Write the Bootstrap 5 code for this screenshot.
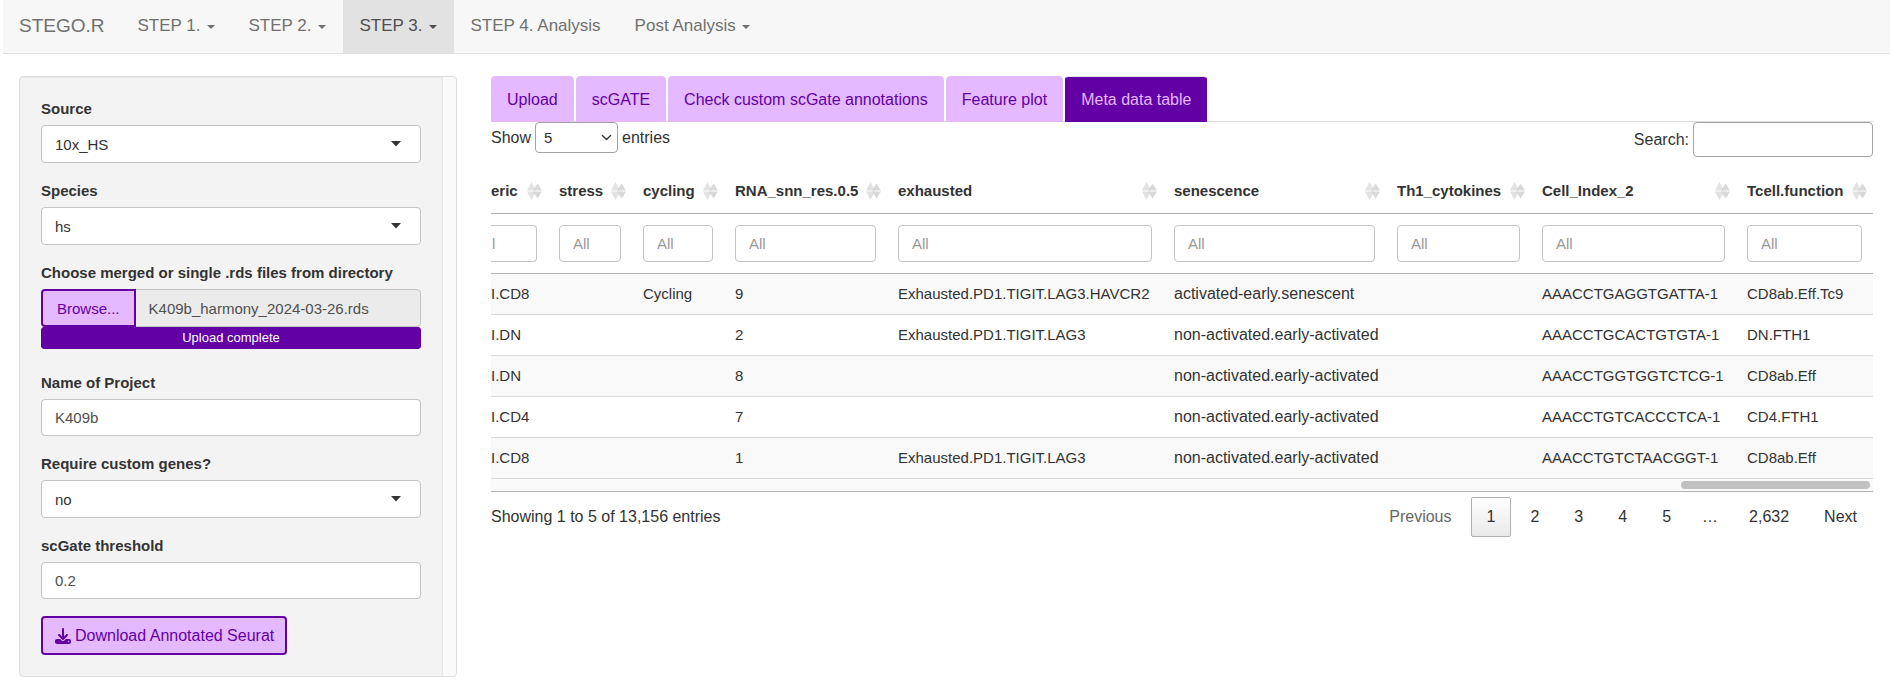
<!DOCTYPE html>
<html lang="en">
<head>
<meta charset="utf-8">
<meta name="viewport" content="width=device-width, initial-scale=1">
<title>STEGO.R</title>
<link href="https://cdn.jsdelivr.net/npm/bootstrap@5.3.0/dist/css/bootstrap.min.css" rel="stylesheet">
<style>
:root { --deep: #6200a6; --pale: #e4b9ff; --line: #b3b3b3; }
body { font-family: "Liberation Sans", Arial, sans-serif; font-size: 16px; line-height: 22px; color: #333; background: #fff; }
.app-bar { margin: 0 9px 0 3px; padding: 0; background: #f7f7f7; border-bottom: 1px solid #e1e1e1; }
.app-bar .navbar-brand { font-size: 19px; color: #707070; padding: 15px 16px 16px; margin: 0; line-height: 22px; }
.app-bar .nav-link { font-size: 17px; line-height: 22px; color: #707070; padding: 15px 17px 16px !important; }
.app-bar .nav-link.active { background: #e2e2e2; color: #4f4f4f; }
.app-bar .dropdown-toggle::after { margin-left: 6px; vertical-align: 2px; border-width: 4px 4px 0; }
.app-body { margin: 22px 9px 0 2px; }
.app-body > .row { --bs-gutter-x: 34px; margin: 0; }
.side-well { background: #f3f3f3; border: 1px solid #dedede; border-radius: 4px; box-shadow: inset 0 1px 1px #0000000d; }
.side-form { padding: 21px; }
.side-track { width: 14px; background: #fafafa; border-left: 1px solid #e6e6e6; border-radius: 0 4px 4px 0; }
.field { margin-bottom: 17px; }
.file-field { margin-bottom: 23px; }
.side-form label { display: block; font-size: 15px; font-weight: 700; margin-bottom: 5px; line-height: 22px; white-space: nowrap; }
.form-control, .form-select { font-size: 15px; line-height: 21px; border-color: #c4c4c4; border-radius: 4px; padding: 7px 13px; color: #505050; height: 37px; background-color: #fff; }
.side-form .form-select { height: 38px; color: #333; background-size: 10px 6px; background-position: right 19px center;
  background-image: url("data:image/svg+xml,%3Csvg xmlns='http://www.w3.org/2000/svg' viewBox='0 0 10 6'%3E%3Cpath d='M0 0h10L5 5.500z' fill='%23333'/%3E%3C/svg%3E"); }
.purple-btn { background: var(--pale); border: 2px solid var(--deep); color: var(--deep); font-size: 16px; line-height: 21px; border-radius: 4px; padding: 7px 11px 7px 12px; height: 39px; }
.file-row .purple-btn { height: 38px; padding: 7px 14px; font-size: 15px; }
.file-row .form-control { height: 38px; background: #ebebeb; }
.done-bar { height: 22px; border-radius: 4px; background: var(--deep); font-size: 13px; }
.done-bar .progress-bar { background: var(--deep); }
.step-tabs { border-bottom: 1px solid #ddd; gap: 2px; }
.step-tabs .nav-link { font-size: 16px; line-height: 22px; padding: 12px 15px 10px; color: var(--deep); background: var(--pale); border-color: var(--pale); border-radius: 4px 4px 0 0; margin-bottom: -1px; }
.step-tabs .nav-link.active { color: var(--pale); background: var(--deep); border-color: #ddd var(--deep) var(--deep); }
.grid-tools { margin-bottom: 12px; }
.length-pick { width: 83px; height: 31px; padding: 4px 8px; border-color: #a3a3a3; color: #333; background-position: right 5px center; background-size: 11px 11px; }
.find-box { width: 180px; height: 35px; border-color: #a3a3a3; }
.meta-frame { border-bottom: 1px solid var(--line); }
.meta-grid { table-layout: fixed; width: 100%; font-size: 15px; white-space: nowrap; margin: 0; }
.meta-grid th { height: 44px; padding: 0 6px 0 11px; font-weight: 700; border-bottom: 1px solid var(--line); }
.meta-grid td { padding: 9px 0 9px 11px; border-bottom: 1px solid #dadada; height: 41px; line-height: 22px; }
.meta-grid .filters td { padding: 11px 11px 10px; height: 60px; border-bottom: 1px solid var(--line); }
.meta-grid tr > :first-child { padding-left: 0; }
.meta-grid .filters td:first-child { padding-left: 0; }
.meta-grid .filters td:first-child .form-control { border-left: 0; border-radius: 0 4px 4px 0; padding-left: 1px; }
.meta-grid tbody tr:nth-child(odd) { background: #f9f9f9; }
.meta-grid .prose { font-size: 16px; }
.meta-grid .form-control::placeholder { color: #999; opacity: 1; }
.w-a { width: 57px } .w-b { width: 84px } .w-c { width: 92px } .w-d { width: 163px } .w-e { width: 276px }
.w-f { width: 223px } .w-g { width: 145px } .w-h { width: 205px } .w-i { width: 137px }
.scroll-strip { height: 12px; background: #fafafa; padding: 2px 3px; }
.scroll-thumb { width: 189px; height: 8px; border-radius: 4px; background: #c1c1c1; }
.grid-foot { padding-top: 5px; }
.pages { gap: 4px; }
.pages .page-link { font-size: 16px; line-height: 22px; padding: 8px 15px; border: 1px solid transparent; border-radius: 2px; color: #333; background: none; }
.pages .page-gap { padding: 8px 11px; }
.pages .disabled .page-link { color: #666; }
.pages .active .page-link { border-color: #b0b0b0; background: linear-gradient(#fff, #e9e9e9); }
</style>
</head>
<body>
<nav class="navbar navbar-expand app-bar">
  <a class="navbar-brand" href="#">STEGO.R</a>
  <ul class="navbar-nav">
    <li class="nav-item"><a class="nav-link dropdown-toggle" href="#">STEP 1.</a></li>
    <li class="nav-item"><a class="nav-link dropdown-toggle" href="#">STEP 2.</a></li>
    <li class="nav-item"><a class="nav-link dropdown-toggle active" href="#">STEP 3.</a></li>
    <li class="nav-item"><a class="nav-link" href="#">STEP 4. Analysis</a></li>
    <li class="nav-item"><a class="nav-link dropdown-toggle" href="#">Post Analysis</a></li>
  </ul>
</nav>

<svg class="d-none" aria-hidden="true">
  <symbol id="sort" viewBox="0 0 15 18"><path d="M0 8.400 4.500 0 9 8.400zM0 9.600h9L4.500 18z" fill="#e2e2e2"/><path d="M6 8.400 10.600 1.500 15 8.400zM6 9.600h9l-4.400 7z" fill="#d2d2d2" fill-opacity=".85"/></symbol>
</svg>

<div class="app-body">
  <div class="row">
    <aside class="col-3">
      <div class="side-well d-flex">
        <form class="side-form flex-grow-1">
          <div class="field">
            <label for="source">Source</label>
            <select class="form-select" id="source"><option>10x_HS</option></select>
          </div>
          <div class="field">
            <label for="species">Species</label>
            <select class="form-select" id="species"><option>hs</option></select>
          </div>
          <div class="file-field">
            <label for="rds">Choose merged or single .rds files from directory</label>
            <div class="input-group file-row">
              <button type="button" class="btn purple-btn">Browse...</button>
              <input type="text" class="form-control" id="rds" value="K409b_harmony_2024-03-26.rds" readonly>
            </div>
            <div class="progress done-bar"><div class="progress-bar w-100">Upload complete</div></div>
          </div>
          <div class="field">
            <label for="project">Name of Project</label>
            <input type="text" class="form-control" id="project" value="K409b">
          </div>
          <div class="field">
            <label for="genes">Require custom genes?</label>
            <select class="form-select" id="genes"><option>no</option></select>
          </div>
          <div class="field">
            <label for="threshold">scGate threshold</label>
            <input type="text" class="form-control" id="threshold" value="0.2">
          </div>
          <button type="button" class="btn purple-btn d-inline-flex align-items-center gap-1">
            <svg width="16" height="16" viewBox="0 0 512 512" fill="currentColor" aria-hidden="true"><path d="M288 32c0-17.700-14.300-32-32-32s-32 14.300-32 32v242.700l-73.400-73.400c-12.500-12.500-32.800-12.500-45.300 0s-12.500 32.800 0 45.300l128 128c12.500 12.500 32.800 12.500 45.300 0l128-128c12.500-12.500 12.500-32.800 0-45.300s-32.800-12.500-45.300 0L288 274.700V32zM64 352c-35.300 0-64 28.700-64 64v32c0 35.300 28.700 64 64 64h384c35.300 0 64-28.700 64-64v-32c0-35.300-28.700-64-64-64H346.500l-45.300 45.300c-25 25-65.500 25-90.500 0L165.500 352H64zm368 56a24 24 0 1 1 0 48 24 24 0 1 1 0-48z"/></svg>
            Download Annotated Seurat
          </button>
        </form>
        <div class="side-track"></div>
      </div>
    </aside>

    <main class="col-9">
      <ul class="nav nav-tabs step-tabs">
        <li class="nav-item"><a class="nav-link" href="#">Upload</a></li>
        <li class="nav-item"><a class="nav-link" href="#">scGATE</a></li>
        <li class="nav-item"><a class="nav-link" href="#">Check custom scGate annotations</a></li>
        <li class="nav-item"><a class="nav-link" href="#">Feature plot</a></li>
        <li class="nav-item"><a class="nav-link active" href="#">Meta data table</a></li>
      </ul>

      <div class="grid-tools d-flex justify-content-between align-items-start">
        <label class="d-flex align-items-center gap-1">Show
          <select class="form-select length-pick"><option>5</option></select>
          entries</label>
        <label class="d-flex align-items-center gap-1">Search:
          <input type="search" class="form-control find-box"></label>
      </div>

      <div class="meta-frame">
        <table class="meta-grid">
          <colgroup><col class="w-a"><col class="w-b"><col class="w-c"><col class="w-d"><col class="w-e"><col class="w-f"><col class="w-g"><col class="w-h"><col class="w-i"></colgroup>
          <thead>
            <tr>
              <th><div class="d-flex align-items-center justify-content-between">eric<svg width="15" height="18"><use href="#sort"/></svg></div></th>
              <th><div class="d-flex align-items-center justify-content-between">stress<svg width="15" height="18"><use href="#sort"/></svg></div></th>
              <th><div class="d-flex align-items-center justify-content-between">cycling<svg width="15" height="18"><use href="#sort"/></svg></div></th>
              <th><div class="d-flex align-items-center justify-content-between">RNA_snn_res.0.5<svg width="15" height="18"><use href="#sort"/></svg></div></th>
              <th><div class="d-flex align-items-center justify-content-between">exhausted<svg width="15" height="18"><use href="#sort"/></svg></div></th>
              <th><div class="d-flex align-items-center justify-content-between">senescence<svg width="15" height="18"><use href="#sort"/></svg></div></th>
              <th><div class="d-flex align-items-center justify-content-between">Th1_cytokines<svg width="15" height="18"><use href="#sort"/></svg></div></th>
              <th><div class="d-flex align-items-center justify-content-between">Cell_Index_2<svg width="15" height="18"><use href="#sort"/></svg></div></th>
              <th><div class="d-flex align-items-center justify-content-between">Tcell.function<svg width="15" height="18"><use href="#sort"/></svg></div></th>
            </tr>
            <tr class="filters">
              <td><input type="text" class="form-control" placeholder="l" aria-label="generic"></td>
              <td><input type="text" class="form-control" placeholder="All" aria-label="stress"></td>
              <td><input type="text" class="form-control" placeholder="All" aria-label="cycling"></td>
              <td><input type="text" class="form-control" placeholder="All" aria-label="RNA_snn_res.0.5"></td>
              <td><input type="text" class="form-control" placeholder="All" aria-label="exhausted"></td>
              <td><input type="text" class="form-control" placeholder="All" aria-label="senescence"></td>
              <td><input type="text" class="form-control" placeholder="All" aria-label="Th1_cytokines"></td>
              <td><input type="text" class="form-control" placeholder="All" aria-label="Cell_Index_2"></td>
              <td><input type="text" class="form-control" placeholder="All" aria-label="Tcell.function"></td>
            </tr>
          </thead>
          <tbody>
            <tr><td>I.CD8</td><td></td><td>Cycling</td><td>9</td><td>Exhausted.PD1.TIGIT.LAG3.HAVCR2</td><td class="prose">activated-early.senescent</td><td></td><td>AAACCTGAGGTGATTA-1</td><td>CD8ab.Eff.Tc9</td></tr>
            <tr><td>I.DN</td><td></td><td></td><td>2</td><td>Exhausted.PD1.TIGIT.LAG3</td><td class="prose">non-activated.early-activated</td><td></td><td>AAACCTGCACTGTGTA-1</td><td>DN.FTH1</td></tr>
            <tr><td>I.DN</td><td></td><td></td><td>8</td><td></td><td class="prose">non-activated.early-activated</td><td></td><td>AAACCTGGTGGTCTCG-1</td><td>CD8ab.Eff</td></tr>
            <tr><td>I.CD4</td><td></td><td></td><td>7</td><td></td><td class="prose">non-activated.early-activated</td><td></td><td>AAACCTGTCACCCTCA-1</td><td>CD4.FTH1</td></tr>
            <tr><td>I.CD8</td><td></td><td></td><td>1</td><td>Exhausted.PD1.TIGIT.LAG3</td><td class="prose">non-activated.early-activated</td><td></td><td>AAACCTGTCTAACGGT-1</td><td>CD8ab.Eff</td></tr>
          </tbody>
        </table>
        <div class="scroll-strip d-flex justify-content-end"><div class="scroll-thumb"></div></div>
      </div>

      <div class="grid-foot d-flex justify-content-between align-items-center">
        <div>Showing 1 to 5 of 13,156 entries</div>
        <ul class="pagination pages mb-0">
          <li class="page-item disabled"><a class="page-link" href="#">Previous</a></li>
          <li class="page-item active"><a class="page-link" href="#">1</a></li>
          <li class="page-item"><a class="page-link" href="#">2</a></li>
          <li class="page-item"><a class="page-link" href="#">3</a></li>
          <li class="page-item"><a class="page-link" href="#">4</a></li>
          <li class="page-item"><a class="page-link" href="#">5</a></li>
          <li class="page-item"><span class="page-link page-gap">…</span></li>
          <li class="page-item"><a class="page-link" href="#">2,632</a></li>
          <li class="page-item"><a class="page-link" href="#">Next</a></li>
        </ul>
      </div>
    </main>
  </div>
</div>
<script src="https://cdn.jsdelivr.net/npm/bootstrap@5.3.0/dist/js/bootstrap.bundle.min.js"></script>
</body>
</html>
